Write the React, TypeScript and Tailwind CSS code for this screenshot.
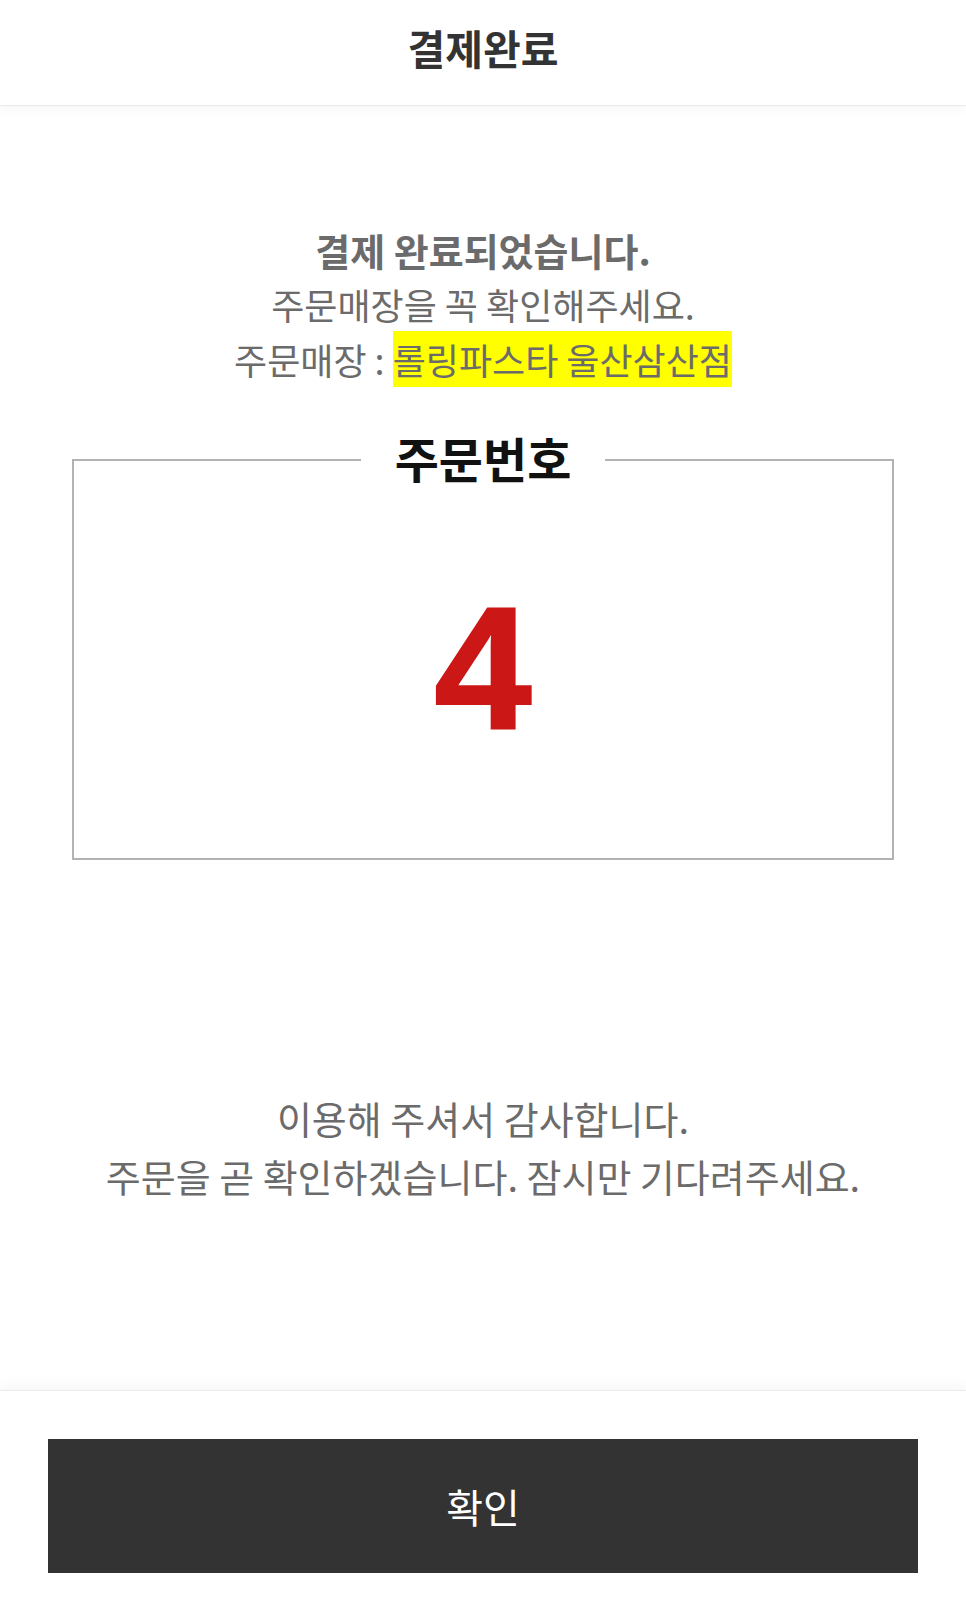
import React from 'react';

const order = {
  storeName: '롤링파스타 울산삼산점',
  orderNo: 4,
};

export default function App() {
  return (
    <div className="min-h-screen flex flex-col bg-white font-['Noto_Sans_CJK_KR','Noto_Sans',sans-serif]">
      {/* Header */}
      <header className="h-[106px] flex items-center justify-center pb-[10px] border-b border-[#ebebeb] shadow-[0_4px_10px_rgba(0,0,0,0.035)] relative z-10">
        <h1 className="text-[41px] font-bold text-[#333] leading-none">결제완료</h1>
      </header>

      <main className="flex-1 flex flex-col items-center">
        {/* Message */}
        <div className="mt-[116px] text-center text-[36px] leading-[55px] text-[#6b6b6b]">
          <p className="font-bold text-[38px]">결제 완료되었습니다.</p>
          <p>주문매장을 꼭 확인해주세요.</p>
          <p>
            주문매장 : <span className="bg-[#ffff00] py-[2px]">{order.storeName}</span>
          </p>
        </div>

        {/* Order number box */}
        <fieldset className="mt-[46px] w-[822px] border-2 border-[#b3b3b3]">
          <legend className="mx-auto px-[34px] pb-[6px] text-[48px] font-bold leading-none text-[#111]">주문번호</legend>
          <div className="h-[371px] pb-[11px] flex items-center justify-center">
            <span className="font-['Liberation_Sans',Arial,sans-serif] text-[175px] font-bold leading-none text-[#cc1717] [-webkit-text-stroke:2px_#cc1717]">
              {order.orderNo}
            </span>
          </div>
        </fieldset>

        {/* Thanks */}
        <div className="mt-[229px] text-center text-[38px] leading-[58px] text-[#6b6b6b]">
          <p>이용해 주셔서 감사합니다.</p>
          <p>주문을 곧 확인하겠습니다. 잠시만 기다려주세요.</p>
        </div>
      </main>

      {/* Footer */}
      <footer className="border-t border-[#ebebeb] shadow-[0_-6px_12px_rgba(0,0,0,0.035)] px-[48px] pt-[48px] pb-[31px]">
        <button className="w-full h-[134px] bg-[#333] text-white text-[40px] leading-none flex items-center justify-center">
          확인
        </button>
      </footer>
    </div>
  );
}
